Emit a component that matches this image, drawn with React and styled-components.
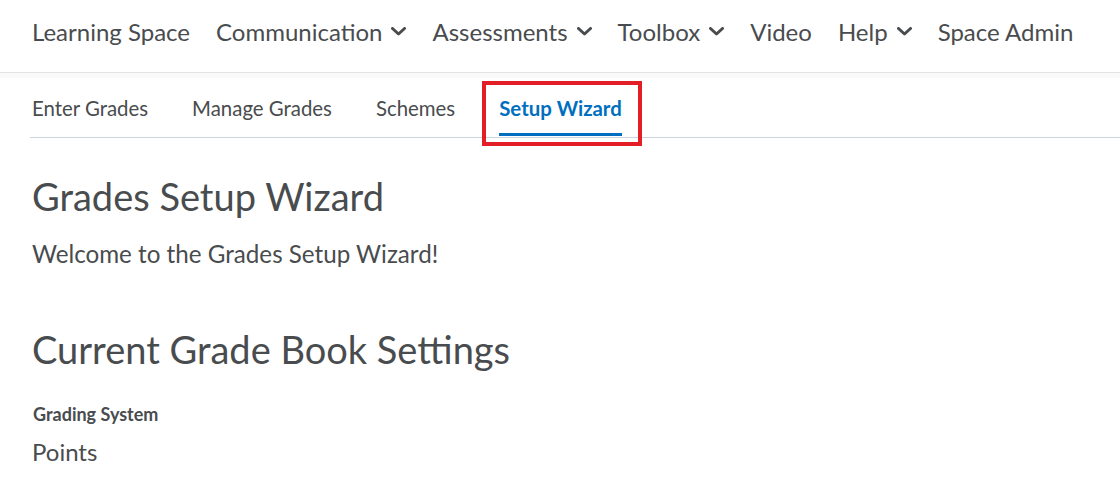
import React from "react";
import styled, { createGlobalStyle } from "styled-components";

const Global = createGlobalStyle`
  html, body { margin: 0; padding: 0; background: #fff; }
  body { font-family: Lato, "Noto Sans", sans-serif; color: #494c4e; }
`;

const Page = styled.div`
  width: 1120px;
  height: 493px;
  overflow: hidden;
  background: #fff;
`;

const TopNav = styled.nav`
  height: 73px;
  box-sizing: border-box;
  border-bottom: 1px solid #e3e3e3;
  display: flex;
  align-items: center;
  padding: 0 32px 10px;
  gap: 26px;
`;

const NavItem = styled.div`
  display: flex;
  align-items: center;
  gap: 9px;
  font-size: 24px;
  color: #494c4e;
`;

const Strip = styled.div`
  height: 5px;
  background: #f9f9f9;
`;

const Tabs = styled.div`
  margin-left: 30px;
  display: flex;
  align-items: flex-end;
  height: 60px;
  border-bottom: 1px solid #cdd5dc;
  box-sizing: border-box;
  padding-left: 2px;
  gap: 44px;
`;

const Tab = styled.div`
  position: relative;
  font-size: 20.4px;
  line-height: 24px;
  font-weight: ${(p) => (p.$active ? 700 : 400)};
  color: ${(p) => (p.$active ? "#006fbf" : "#494c4e")};
  padding-bottom: 13px;
  border-bottom: 3px solid ${(p) => (p.$active ? "#006fbf" : "transparent")};
  margin-bottom: 1px;
`;

const Highlight = styled.div`
  position: absolute;
  left: -17px;
  right: -20px;
  top: -15px;
  bottom: -13px;
  border: 4px solid #e41e26;
`;

const Content = styled.main`
  padding: 0 32px;
`;

const H1 = styled.h1`
  margin: 34px 0 0;
  font-size: 38px;
  font-weight: 400;
  line-height: 48px;
  color: #494c4e;
`;

const Welcome = styled.p`
  margin: 19px 0 0;
  font-size: 24.2px;
  line-height: 30px;
`;

const H2 = styled.h2`
  margin: 56px 0 0;
  font-size: 38px;
  font-weight: 400;
  line-height: 48px;
  color: #494c4e;
`;

const Label = styled.div`
  margin-top: 30px;
  margin-left: 1px;
  font-size: 18px;
  font-weight: 700;
  line-height: 22px;
`;

const Value = styled.div`
  margin-top: 12px;
  font-size: 24px;
  line-height: 30px;
`;

const Chevron = () => (
  <svg width="15" height="9" viewBox="0 0 15 9" aria-hidden="true">
    <path d="M1.5 1.5 L7.5 7 L13.5 1.5" fill="none" stroke="#494c4e" strokeWidth="3" strokeLinecap="round" strokeLinejoin="round" />
  </svg>
);

const nav = [
  { label: "Learning Space" },
  { label: "Communication", menu: true },
  { label: "Assessments", menu: true },
  { label: "Toolbox", menu: true },
  { label: "Video" },
  { label: "Help", menu: true },
  { label: "Space Admin" },
];

const tabs = ["Enter Grades", "Manage Grades", "Schemes", "Setup Wizard"];

export default function App() {
  return (
    <Page>
      <Global />
      <TopNav>
        {nav.map((n) => (
          <NavItem key={n.label}>
            {n.label}
            {n.menu && <Chevron />}
          </NavItem>
        ))}
      </TopNav>
      <Strip />
      <Tabs>
        {tabs.map((t, i) => (
          <Tab key={t} $active={i === 3}>
            {t}
            {i === 3 && <Highlight />}
          </Tab>
        ))}
      </Tabs>
      <Content>
        <H1>Grades Setup Wizard</H1>
        <Welcome>Welcome to the Grades Setup Wizard!</Welcome>
        <H2>Current Grade Book Settings</H2>
        <Label>Grading System</Label>
        <Value>Points</Value>
      </Content>
    </Page>
  );
}
